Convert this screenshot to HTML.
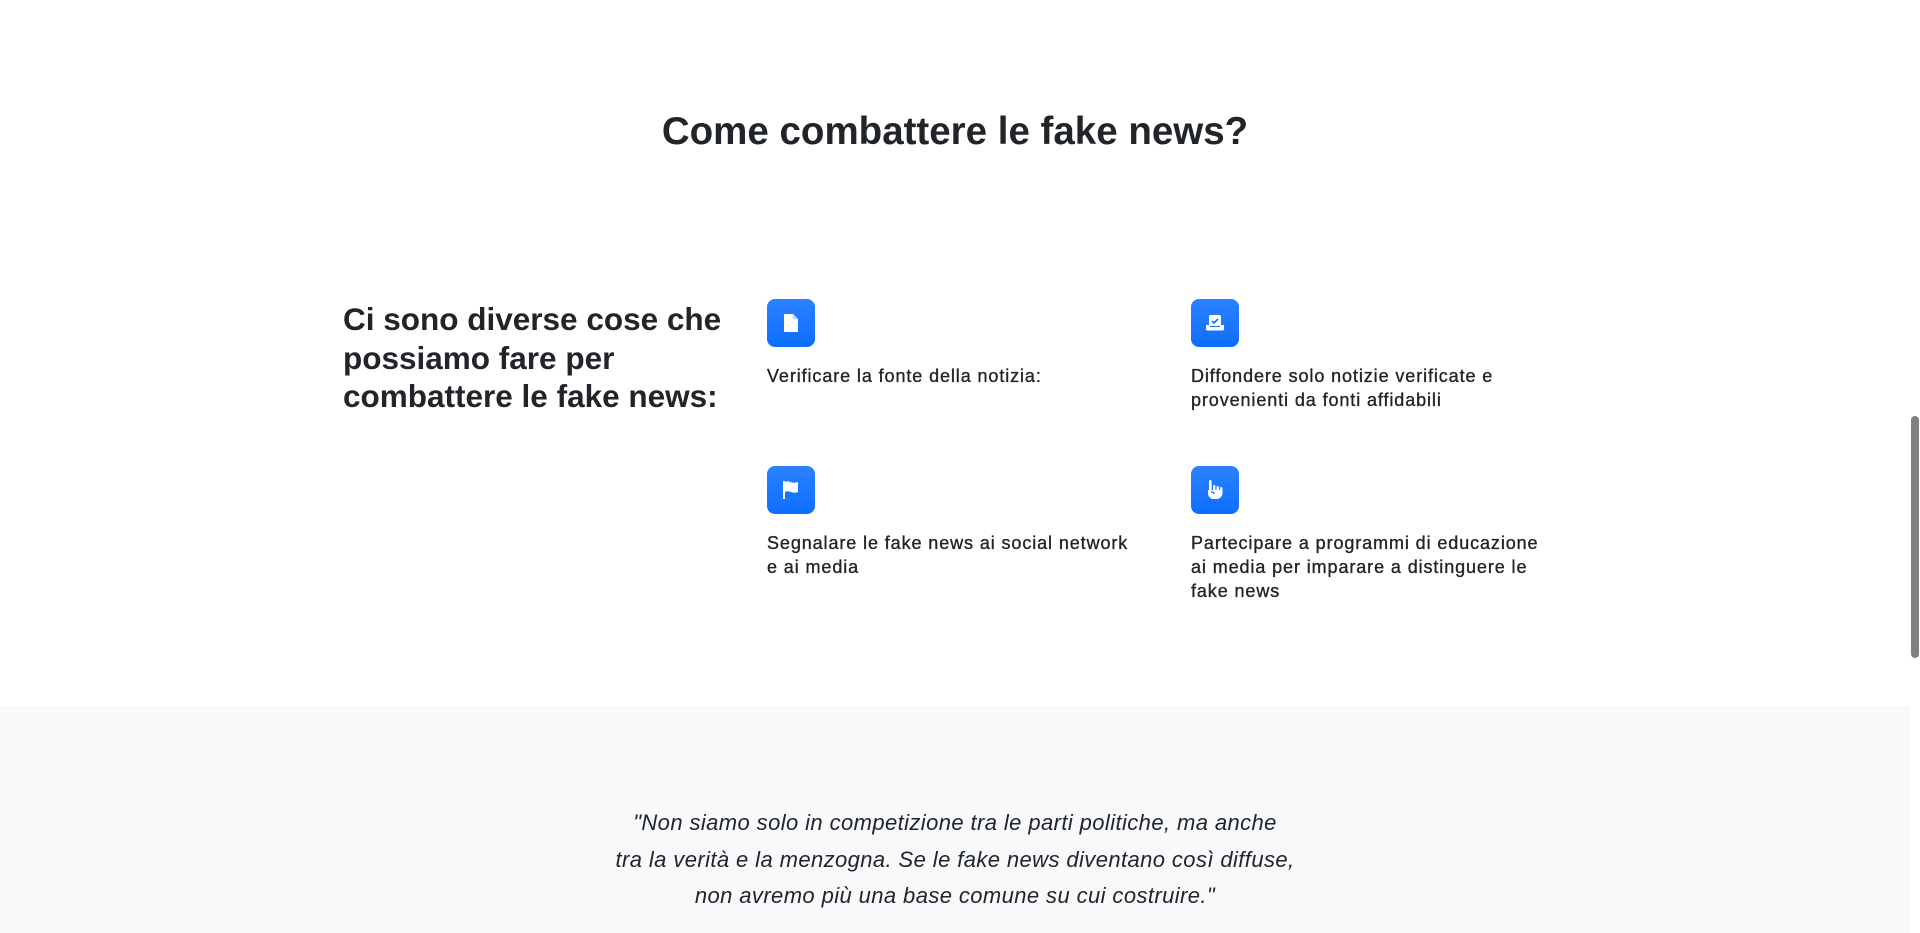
<!DOCTYPE html>
<html><head><meta charset="utf-8"><style>
html,body{margin:0;padding:0;width:1920px;height:933px;overflow:hidden;background:#fff;font-family:"Liberation Sans",sans-serif;color:#212529}
.abs{position:absolute}
h2{position:absolute;left:0;width:1910px;top:107px;margin:0;text-align:center;font-size:38.5px;font-weight:bold;line-height:50px}
.lh{left:343px;top:300px;font-size:31.5px;font-weight:bold;line-height:38.6px;margin:0;white-space:nowrap}
.ic{width:48px;height:48px;border-radius:8px;background:linear-gradient(#2b82ff,#0d6efd)}
.ic svg{position:absolute;left:12px;top:12px}
.t{font-size:18px;line-height:24px;white-space:nowrap;letter-spacing:0.9px;-webkit-text-stroke:0.35px #212529}
.gray{left:0;top:706px;width:1910px;height:227px;background:#f8f9fa}
.q{left:0;width:1910px;top:805px;text-align:center;font-size:22px;letter-spacing:0.4px;font-style:italic;line-height:36.5px}
.sb{left:1910px;top:0;width:10px;height:933px;background:#fff}
.th{left:1911px;top:416px;width:8px;height:242px;background:#808080;border-radius:4px}
</style></head><body>
<h2>Come combattere le fake news?</h2>
<div class="abs lh">Ci sono diverse cose che<br>possiamo fare per<br>combattere le fake news:</div>

<div class="abs ic" style="left:767px;top:299px"><svg width="24" height="24" viewBox="0 0 24 24"><path d="M6 3h8l5 5v12a1 1 0 0 1-1 1H6a1 1 0 0 1-1-1V4a1 1 0 0 1 1-1z" fill="#fff"/><path d="M14 3v5h5" fill="#b8d4ff"/></svg></div>
<div class="abs t" style="left:767px;top:364px">Verificare la fonte della notizia:</div>

<div class="abs ic" style="left:1191px;top:299px"><svg width="24" height="24" viewBox="0 0 24 24"><rect x="6" y="4" width="12" height="11" rx="1.5" fill="#fff"/><path d="M9 10l2 2 4-4" stroke="#0d6efd" stroke-width="1.6" fill="none"/><path d="M3 14h4v2h10v-2h4v4a1.5 1.5 0 0 1-1.5 1.5h-15A1.5 1.5 0 0 1 3 18z" fill="#fff"/></svg></div>
<div class="abs t" style="left:1191px;top:364px">Diffondere solo notizie verificate e<br>provenienti da fonti affidabili</div>

<div class="abs ic" style="left:767px;top:466px"><svg width="24" height="24" viewBox="0 0 24 24"><rect x="4" y="3" width="2" height="18" fill="#fff"/><path d="M6 4c3-1.5 5 0 7 0.5s4 0 6-0.5v10c-2 0.6-4 1-6 0.4S9 12.5 6 14z" fill="#fff"/></svg></div>
<div class="abs t" style="left:767px;top:531px">Segnalare le fake news ai social network<br>e ai media</div>

<div class="abs ic" style="left:1191px;top:466px"><svg width="24" height="24" viewBox="0 0 24 24"><rect x="6" y="2" width="2.6" height="10" rx="1.3" fill="#fff"/><rect x="10" y="7" width="2.4" height="6" rx="1.2" fill="#fff"/><rect x="13.5" y="8" width="2.4" height="5" rx="1.2" fill="#fff"/><rect x="17" y="9" width="2.4" height="4" rx="1.2" fill="#fff"/><path d="M5 12h14.5v3a6 6 0 0 1-6 6h-3A5.5 5.5 0 0 1 5 15.5z" fill="#fff"/><path d="M8 14c2 0 3 .8 3 2" stroke="#0d6efd" stroke-width="1.3" fill="none"/></svg></div>
<div class="abs t" style="left:1191px;top:531px">Partecipare a programmi di educazione<br>ai media per imparare a distinguere le<br>fake news</div>

<div class="abs gray"></div>
<div class="abs q">"Non siamo solo in competizione tra le parti politiche, ma anche<br>tra la verità e la menzogna. Se le fake news diventano così diffuse,<br>non avremo più una base comune su cui costruire."</div>
<div class="abs sb"></div><div class="abs th"></div>
</body></html>
